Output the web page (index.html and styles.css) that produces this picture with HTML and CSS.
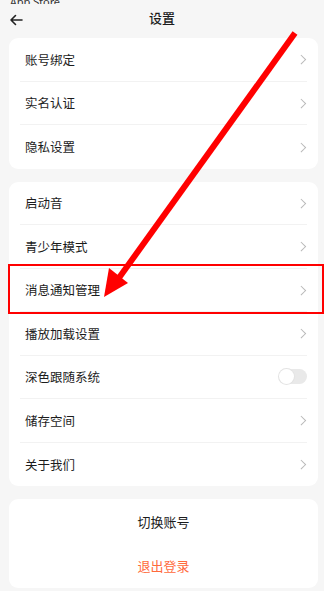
FILE: index.html
```html
<!DOCTYPE html>
<html lang="zh-CN">

<head>
    <meta charset="UTF-8">
    <meta name="viewport" content="width=device-width, initial-scale=1.0">
    <title>设置</title>
    <link rel="stylesheet" href="styles.css">
</head>

<body>
    <div class="page">
        <div class="status">App Store</div>
        <div class="header">
            <svg class="back" width="14" height="12" viewBox="0 0 14 12">
                <path d="M13 6H2M6.5 1.5L2 6l4.5 4.5" fill="none" stroke="#222" stroke-width="1.6" stroke-linecap="round" stroke-linejoin="round"/>
            </svg>
            <div class="title">设置</div>
        </div>

        <div class="card">
            <div class="row"><span>账号绑定</span><i class="arrow"></i></div>
            <div class="row"><span>实名认证</span><i class="arrow"></i></div>
            <div class="row"><span>隐私设置</span><i class="arrow"></i></div>
        </div>

        <div class="card">
            <div class="row"><span>启动音</span><i class="arrow"></i></div>
            <div class="row"><span>青少年模式</span><i class="arrow"></i></div>
            <div class="row mark"><span>消息通知管理</span><i class="arrow"></i></div>
            <div class="row"><span>播放加载设置</span><i class="arrow"></i></div>
            <div class="row"><span>深色跟随系统</span><i class="switch"></i></div>
            <div class="row"><span>储存空间</span><i class="arrow"></i></div>
            <div class="row"><span>关于我们</span><i class="arrow"></i></div>
        </div>

        <div class="card actions">
            <div class="btn">切换账号</div>
            <div class="btn logout">退出登录</div>
        </div>

        <!-- 标注箭头 -->
        <svg class="pointer" width="324" height="591" viewBox="0 0 324 591">
            <line x1="295" y1="33" x2="116" y2="282" stroke="#ff0000" stroke-width="6"/>
            <polygon points="104,297 109,268 128,283" fill="#ff0000"/>
        </svg>
    </div>
</body>

</html>
```

FILE: styles.css
```css
* {
    margin: 0;
    padding: 0;
    box-sizing: border-box;
}

body {
    background-color: #f6f6f6;
    font-family: "Noto Sans CJK SC", "Noto Sans", sans-serif;
    color: #1c1c1c;
}

.page {
    position: relative;
    width: 324px;
    height: 591px;
    overflow: hidden;
}

.status {
    height: 4px;
    overflow: hidden;
    padding-left: 10px;
    font-size: 11px;
    line-height: 2px;
    color: #333;
}

.header {
    height: 34px;
    display: flex;
    align-items: center;
    justify-content: center;
    position: relative;
}

.header>.back {
    position: absolute;
    left: 9px;
    top: 10px;
}

.header>.title {
    font-size: 13px;
    font-weight: 500;
    margin-top: -8px;
}

.card {
    margin: 0 6px 13px 9px;
    background-color: #fff;
    border-radius: 9px;
    padding: 0 11px;
}

.row {
    height: 43.5px;
    display: flex;
    align-items: center;
    justify-content: space-between;
    padding-left: 5px;
    font-size: 12.5px;
    border-bottom: 1px solid #f2f2f2;
}

.row:last-child {
    border-bottom: none;
}

.arrow {
    width: 6.5px;
    height: 6.5px;
    border-top: 1.4px solid #b8b8b8;
    border-right: 1.4px solid #b8b8b8;
    transform: rotate(45deg);
    margin-right: 3px;
}

.switch {
    width: 28px;
    height: 15px;
    border-radius: 8px;
    background-color: #e9e9e9;
    position: relative;
}

.switch::after {
    content: '';
    position: absolute;
    left: 0;
    top: 0;
    width: 15px;
    height: 15px;
    border-radius: 50%;
    background-color: #fff;
    box-shadow: 0 0 0 1px #e3e3e3;
}

.mark {
    position: relative;
}

.mark::after {
    content: '';
    position: absolute;
    top: -5px;
    bottom: -3px;
    left: -12px;
    right: -17px;
    border: 2px solid #ff0000;
}

.actions {
    padding: 0;
    margin-bottom: 0;
}

.btn {
    height: 44.5px;
    display: flex;
    align-items: center;
    justify-content: center;
    font-size: 13px;
}

.logout {
    color: #ff6a3c;
}

.pointer {
    position: absolute;
    left: 0;
    top: 0;
    pointer-events: none;
}
```
